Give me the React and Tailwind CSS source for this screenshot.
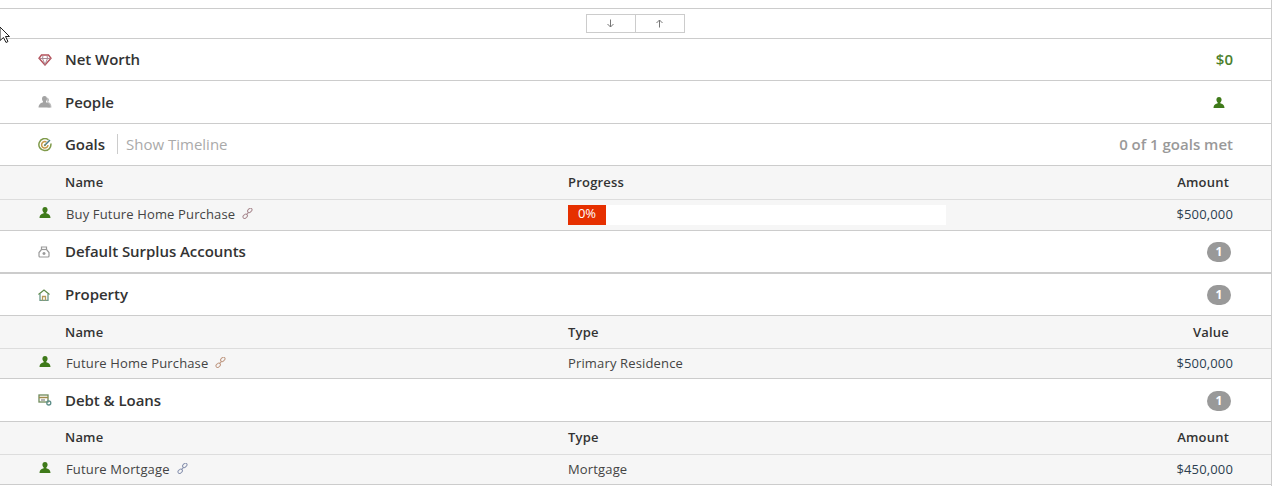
import React from 'react'

const Person = ({ className = '' }) => (
  <svg viewBox="0 0 12 11" className={`w-3 h-[11px] ${className}`} fill="#3f7a1a">
    <path d="M6 0C4.300 0 3.400 1.200 3.400 2.800 3.400 4 4 5 4.700 5.500v.8C3 6.900.800 7.500.500 11h11c-.3-3.500-2.500-4.100-4.200-4.700v-.8C8 5 8.600 4 8.600 2.800 8.600 1.200 7.700 0 6 0z" />
  </svg>
)

const LinkIcon = ({ color }) => (
  <svg viewBox="0 0 12 12" className="w-[11px] h-[11px]" fill="none" stroke={color} strokeWidth="1.100">
    <rect x="5.800" y="0.800" width="5.400" height="3.600" rx="1.800" transform="rotate(-45 8.500 2.600)" />
    <rect x="0.800" y="7.200" width="5.400" height="3.600" rx="1.800" transform="rotate(-45 3.500 9)" />
    <path d="M4.500 7.500l3-3" />
  </svg>
)

const DiamondIcon = () => (
  <svg viewBox="0 0 14 12" className="w-[14px] h-3" fill="none">
    <path d="M3.500 1h7L13 4.200 7 11 1 4.200z" stroke="#b5505a" strokeWidth="1.400" />
    <path d="M1.500 4.500h11M5 1.500 4.500 4.500 7 10.500 9.500 4.500 9 1.500" stroke="#a98a94" strokeWidth="1" />
  </svg>
)

const PeopleIcon = () => (
  <svg viewBox="0 0 14 12" className="w-[14px] h-3">
    <path d="M9 1.500a2.500 2.500 0 0 1 1 4.500c1.800.6 3.500 1.600 3.500 5.500h-4z" fill="#bdbdbd" />
    <path d="M6.500 0C4.800 0 4 1.200 4 2.800 4 4 4.500 5 5 5.500v.8C3.500 6.900 1 7.500.5 11.500h12c-.5-4-3-4.600-4.500-5.200v-.8C8.500 5 9 4 9 2.800 9 1.200 8.200 0 6.500 0z" fill="#a3a3a3" />
  </svg>
)

const GoalIcon = () => (
  <svg viewBox="0 0 14 14" className="w-[14px] h-[14px]" fill="none" strokeWidth="1.500">
    <path d="M10.500 1.800A6 6 0 1 0 12.800 5.500" stroke="#7f9a4a" />
    <path d="M8.500 4.100A3.200 3.200 0 1 0 10 7" stroke="#c79a4a" />
    <path d="M6.800 7.200 12 2" stroke="#4f7f8a" />
    <circle cx="6.800" cy="7.200" r="1" fill="#7f8f5a" stroke="none" />
  </svg>
)

const SurplusIcon = () => (
  <svg viewBox="0 0 12 12" className="w-3 h-3" fill="none" stroke="#9a9a9a" strokeWidth="1.200">
    <path d="M3.500 1h5v2.500l2.500 3v3.500a1 1 0 0 1-1 1H2a1 1 0 0 1-1-1V6.500l2.500-3z" />
    <path d="M3.500 3.500h5" />
    <path d="M4.500 7.500h3M6 6v3" strokeWidth="1.500" />
  </svg>
)

const HouseIcon = () => (
  <svg viewBox="0 0 12 12" className="w-3 h-3" fill="none" strokeWidth="1.300">
    <path d="M.5 5.500 6 1l5.500 4.500" stroke="#5f8a4a" />
    <path d="M2 5v6.500h8V5" stroke="#6f9a8a" />
    <path d="M4.500 11.500V7.500h3v4" stroke="#b59a5a" />
  </svg>
)

const DebtIcon = () => (
  <svg viewBox="0 0 14 12" className="w-[14px] h-3" fill="none" strokeWidth="1.300">
    <rect x="1" y="1" width="9" height="7" stroke="#6f8a5a" />
    <path d="M1 3.500h9" stroke="#a08a4a" strokeWidth="1.500" />
    <path d="M3 6h4" stroke="#8a8a8a" />
    <circle cx="10.800" cy="9" r="2" stroke="#5f8f8a" />
  </svg>
)

const Badge = ({ className = '' }) => (
  <span className={`w-6 h-5 rounded-full bg-[#999999] text-white text-xs font-bold flex items-center justify-center mr-[2px] ${className}`}>1</span>
)

const Section = ({ icon, title, right, extra, className = 'h-[43px]' }) => (
  <div className={`flex items-center bg-white border-b border-[#cccccc] ${className}`}>
    <div className="w-[65px] pl-[38px] flex-none flex items-center">{icon}</div>
    <span className="text-[15px] font-semibold tracking-[-0.05px] text-[#333333]">{title}</span>
    {extra}
    <div className="ml-auto pr-[38px] flex items-center">{right}</div>
  </div>
)

const TableHead = ({ col2, col3, className = 'h-[34px]' }) => (
  <div className={`flex items-center bg-[#f6f6f6] border-b border-[#dddddd] text-[13px] font-semibold tracking-[0.2px] text-[#333333] ${className}`}>
    <div className="w-[65px] flex-none" />
    <div className="w-[503px] flex-none">Name</div>
    <div>{col2}</div>
    <div className="ml-auto pr-[42px]">{col3}</div>
  </div>
)

const TableRow = ({ name, linkColor, middle, amount }) => (
  <div className="flex items-center h-[30px] bg-[#f6f6f6] border-b border-[#cccccc] text-[13px] tracking-[0.15px] text-[#444444]">
    <div className="w-[66px] pl-[39px] flex-none -mt-[5px]"><Person /></div>
    <div className="w-[502px] flex-none flex items-center gap-[7px]">
      <span>{name}</span>
      <span className="-mt-[3px]"><LinkIcon color={linkColor} /></span>
    </div>
    {middle}
    <div className="ml-auto pr-[38px] text-[#2c3e50]">{amount}</div>
  </div>
)

const App = () => {
  return (
    <div className="relative w-[1275px] h-[486px] bg-white overflow-hidden font-['Open_Sans',sans-serif]">
      <div className="w-[1272px] h-full pt-2 border-r border-[#cccccc]">
        {/* sort buttons */}
        <div className="h-[31px] flex items-center justify-center border-y border-[#cccccc]">
          <div className="flex h-[19px] w-[99px] border border-[#cccccc] -mt-[1px]">
            <div className="flex-1 flex items-center justify-center border-r border-[#cccccc] pr-[2px]">
              <svg viewBox="0 0 9 9" className="w-[9px] h-[9px]" fill="none" stroke="#777777"><path d="M4.500 0.500v7.500M1.500 5l3 3 3-3" /></svg>
            </div>
            <div className="flex-1 flex items-center justify-center pr-[2px]">
              <svg viewBox="0 0 9 9" className="w-[9px] h-[9px]" fill="none" stroke="#777777"><path d="M4.500 8.500V1M1.500 4l3-3 3 3" /></svg>
            </div>
          </div>
        </div>

        <Section className="h-[42px]" icon={<DiamondIcon />} title="Net Worth"
          right={<span className="text-[15px] font-semibold text-[#4c7f2c]">$0</span>} />
        <Section icon={<PeopleIcon />} title="People"
          right={<span className="mr-2"><Person /></span>} />
        <Section className="h-[42px]" icon={<GoalIcon />} title="Goals"
          extra={<span className="ml-3 pl-2 -mt-px border-l border-[#cccccc] text-[15px] leading-5 text-[#aaaaaa]">Show Timeline</span>}
          right={<span className="text-[15px] font-semibold text-[#999999]">0 of 1 goals met</span>} />

        <TableHead col2="Progress" col3="Amount" />
        <div className="flex items-center h-[31px] bg-[#f6f6f6] border-b border-[#cccccc] text-[13px] tracking-[0.15px] text-[#444444]">
          <div className="w-[66px] pl-[39px] flex-none -mt-[5px]"><Person /></div>
          <div className="w-[502px] flex-none flex items-center gap-[7px]">
            <span>Buy Future Home Purchase</span>
            <span className="-mt-[3px]"><LinkIcon color="#a98a90" /></span>
          </div>
          <div className="w-[378px] h-5 bg-white">
            <div className="w-[38px] h-5 bg-[#e63000] text-white text-[13px] leading-4 tracking-normal text-center">0%</div>
          </div>
          <div className="ml-auto pr-[38px] text-[#2c3e50]">$500,000</div>
        </div>

        <Section className="h-[43px] border-b-2" icon={<SurplusIcon />} title="Default Surplus Accounts" right={<Badge />} />
        <Section className="h-[42px]" icon={<HouseIcon />} title="Property" right={<Badge />} />
        <TableHead col2="Type" col3="Value" className="h-[33px] pt-px" />
        <TableRow name="Future Home Purchase" linkColor="#c09a84" amount="$500,000"
          middle={<span>Primary Residence</span>} />

        <Section icon={<DebtIcon />} title="Debt & Loans" right={<Badge className="mt-px" />} />
        <TableHead col2="Type" col3="Amount" className="h-[33px]" />
        <TableRow name="Future Mortgage" linkColor="#8a94b0" amount="$450,000"
          middle={<span>Mortgage</span>} />
      </div>

      {/* mouse cursor captured in the screenshot */}
      <svg viewBox="0 0 11 17" className="absolute left-0 top-[26px] w-[11px] h-[18px]" fill="white" stroke="#222222" strokeWidth="1">
        <path d="M0 0.500 9.500 10H5.500l2.500 5-2 1-2.500-5L0 14z" />
      </svg>
    </div>
  )
}

export default App
